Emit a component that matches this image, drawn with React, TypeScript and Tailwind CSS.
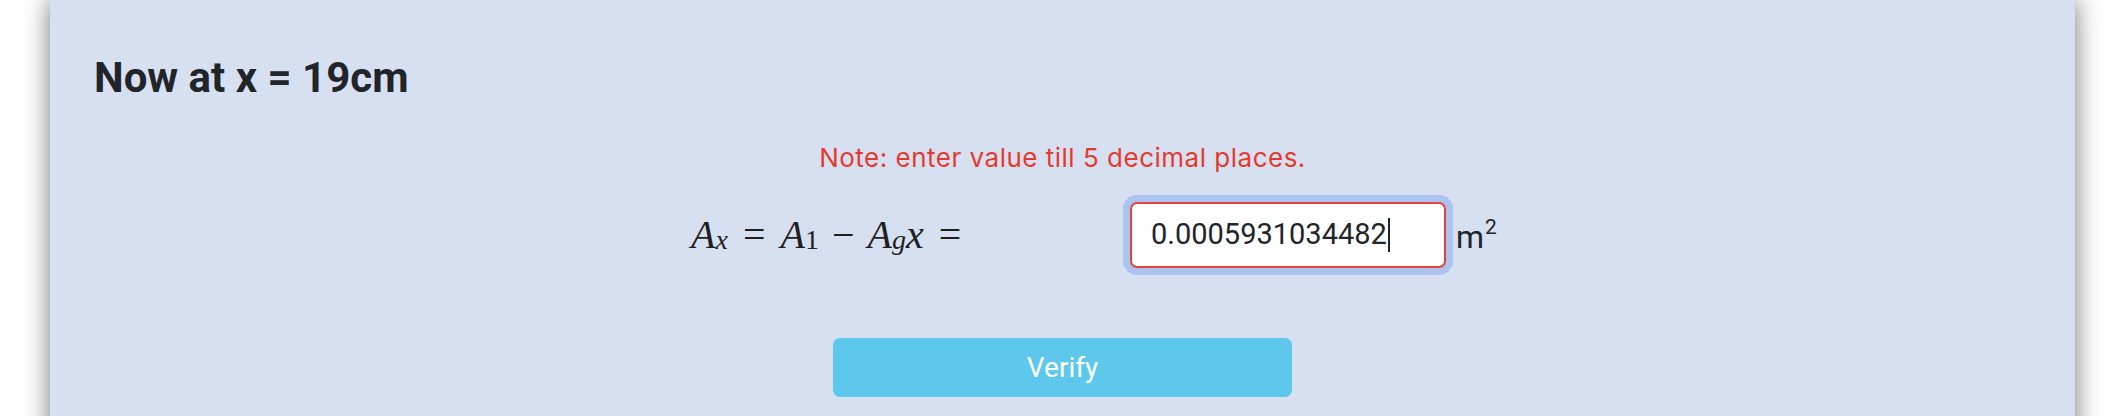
import React from "react";

export default function App() {
  return (
    <div className="w-[2120px] h-[416px] overflow-hidden bg-white" style={{ fontFamily: "Roboto, 'Liberation Sans', sans-serif" }}>
      <div className="ml-[50px] w-[2025px] min-h-[480px] bg-[#d7e0f1] shadow-[0_0_24px_rgba(0,0,0,0.55)] flex flex-col pt-[53px] pl-[44px] pr-[44px]">
        <h3 className="text-[42px] leading-[50px] font-bold text-[#212529]">Now at x = 19cm</h3>
        <div className="mt-[40px] text-center text-[26px] leading-[30px] tracking-[0.5px] text-[#e53a2e]" style={{ fontFamily: "Inter, Roboto, sans-serif" }}>
          Note: enter value till 5 decimal places.
        </div>
        <div className="mt-[29px] flex items-center justify-center">
          <div className="w-[62px]"></div>
          <div className="w-[439px] flex items-center text-[40px] leading-none text-[#1f1f1f]" style={{ fontFamily: "'Liberation Serif', 'DejaVu Serif', serif" }}>
            <span className="italic">A</span>
            <sub className="italic text-[28px] relative top-[5px]">x</sub>
            <span className="mx-[15px]">=</span>
            <span className="italic">A</span>
            <sub className="text-[28px] relative top-[5px]">1</sub>
            <span className="mx-[13px]">−</span>
            <span className="italic">A</span>
            <sub className="italic text-[28px] relative top-[5px]">g</sub>
            <span className="italic">x</span>
            <span className="ml-[15px]">=</span>
          </div>
          <div className="w-[316px] h-[66px] rounded-[7px] border-2 border-[#e0453a] bg-white shadow-[0_0_0_7px_#adc3ef] flex items-center pl-[19px] text-[29px] text-[#212529]">
            <span>0.0005931034482</span>
            <span className="inline-block w-[2px] h-[34px] bg-[#212529] ml-[1px]"></span>
          </div>
          <div className="ml-[10px] w-[40px] text-[32px] leading-none text-[#212529] relative top-[2px] whitespace-nowrap">
            m<sup className="text-[21px] relative -top-[14px] ml-[1px]">2</sup>
          </div>
        </div>
        <div className="mt-[70px] flex justify-center">
          <button className="w-[459px] h-[59px] rounded-[7px] bg-[#5ec8ec] text-white text-[28px]">Verify</button>
        </div>
      </div>
    </div>
  );
}
